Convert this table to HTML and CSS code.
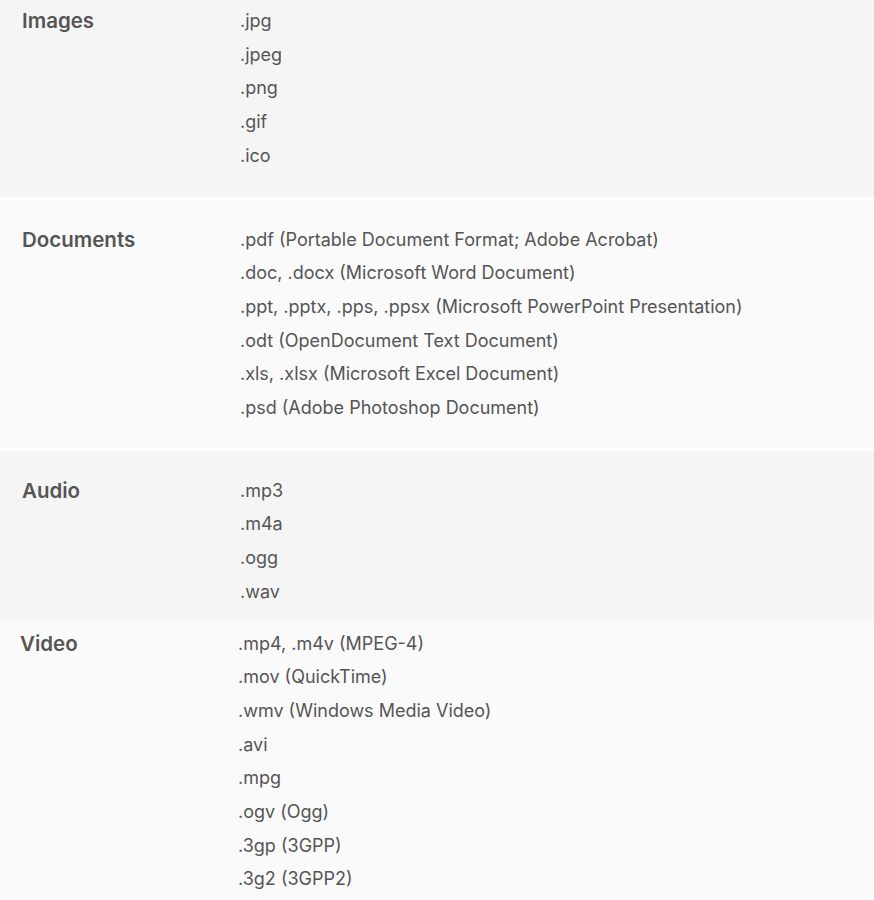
FILE: index.html
```html
<!DOCTYPE html>
<html>
<head>
<meta charset="utf-8">
<link rel="stylesheet" href="styles.css">
</head>
<body>
<div class="types">
  <div class="row row-images">
    <div class="label">Images</div>
    <ul class="vals">
      <li>.jpg</li>
      <li>.jpeg</li>
      <li>.png</li>
      <li>.gif</li>
      <li>.ico</li>
    </ul>
  </div>
  <div class="row row-docs">
    <div class="label">Documents</div>
    <ul class="vals">
      <li>.pdf (Portable Document Format; Adobe Acrobat)</li>
      <li>.doc, .docx (Microsoft Word Document)</li>
      <li>.ppt, .pptx, .pps, .ppsx (Microsoft PowerPoint Presentation)</li>
      <li>.odt (OpenDocument Text Document)</li>
      <li>.xls, .xlsx (Microsoft Excel Document)</li>
      <li>.psd (Adobe Photoshop Document)</li>
    </ul>
  </div>
  <div class="row row-audio">
    <div class="label">Audio</div>
    <ul class="vals">
      <li>.mp3</li>
      <li>.m4a</li>
      <li>.ogg</li>
      <li>.wav</li>
    </ul>
  </div>
  <div class="row row-video">
    <div class="label">Video</div>
    <ul class="vals">
      <li>.mp4, .m4v (MPEG-4)</li>
      <li>.mov (QuickTime)</li>
      <li>.wmv (Windows Media Video)</li>
      <li>.avi</li>
      <li>.mpg</li>
      <li>.ogv (Ogg)</li>
      <li>.3gp (3GPP)</li>
      <li>.3g2 (3GPP2)</li>
    </ul>
  </div>
</div>
</body>
</html>
```

FILE: styles.css
```css
html, body {
  margin: 0;
  padding: 0;
  background: #ffffff;
}
body {
  font-family: Inter, Lato, "Liberation Sans", sans-serif;
  color: #555555;
}
.types {
  display: flex;
  flex-direction: column;
}
.row {
  display: grid;
  grid-template-columns: 218px 1fr;
  padding-left: 22px;
}
.label {
  font-size: 20.5px;
  font-weight: 600;
  line-height: 33.7px;
}
.vals {
  list-style: none;
  margin: 0;
  padding: 0;
  font-size: 18px;
  line-height: 33.7px;
}
.row-images {
  background: #f5f5f5;
  padding-top: 4px;
  padding-bottom: 24px;
  border-bottom: 3px solid #ffffff;
}
.row-docs {
  background: #fafafa;
  padding-top: 23px;
  padding-bottom: 23px;
  border-bottom: 3px solid #ffffff;
}
.row-audio {
  background: #f5f5f5;
  padding-top: 23px;
  padding-bottom: 12px;
}
.row-video {
  background: #fafafa;
  padding-top: 6px;
  padding-bottom: 30px;
  padding-left: 20px;
}
```
